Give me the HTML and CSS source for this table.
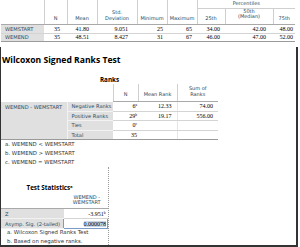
FILE: index.html
```html
<!DOCTYPE html>
<html>
<head>
<meta charset="utf-8">
<link rel="stylesheet" href="styles.css">
</head>
<body>
<div class="desc-wrap">
<table class="desc">
  <colgroup>
    <col class="w43"><col class="w23"><col class="w30"><col class="w40"><col class="w30"><col class="w30"><col class="w28"><col class="w48"><col class="w22">
  </colgroup>
  <tr class="h8">
    <th rowspan="2" class="blank"></th>
    <th rowspan="2">N</th>
    <th rowspan="2">Mean</th>
    <th rowspan="2">Std.<br>Deviation</th>
    <th rowspan="2">Minimum</th>
    <th rowspan="2">Maximum</th>
    <th colspan="3" class="pct">Percentiles</th>
  </tr>
  <tr class="h16">
    <th>25th</th>
    <th class="median">50th<br>(Median)</th>
    <th>75th</th>
  </tr>
  <tr class="row">
    <td class="lab">WEMSTART</td><td>35</td><td>41.80</td><td>9.051</td><td>25</td><td>65</td><td>34.00</td><td>42.00</td><td>48.00</td>
  </tr>
  <tr class="row last">
    <td class="lab">WEMEND</td><td>35</td><td>48.51</td><td>8.427</td><td>31</td><td>67</td><td>46.00</td><td>47.00</td><td>52.00</td>
  </tr>
</table>
</div>

<div class="frame">
  <div class="title">Wilcoxon Signed Ranks Test</div>
  <div class="ranks-block">
    <div class="subtitle">Ranks</div>
    <table class="ranks">
      <colgroup>
        <col class="w66"><col class="w46"><col class="w25"><col class="w39"><col class="w41">
      </colgroup>
      <tr class="rhead">
        <th colspan="2" class="blank"></th>
        <th>N</th>
        <th>Mean Rank</th>
        <th>Sum of<br>Ranks</th>
      </tr>
      <tr class="rrow">
        <td rowspan="4" class="lab1">WEMEND - WEMSTART</td>
        <td class="lab2">Negative Ranks</td>
        <td>6<sup>a</sup></td><td>12.33</td><td>74.00</td>
      </tr>
      <tr class="rrow">
        <td class="lab2">Positive Ranks</td>
        <td>29<sup>b</sup></td><td>19.17</td><td>556.00</td>
      </tr>
      <tr class="rrow">
        <td class="lab2">Ties</td>
        <td>0<sup>c</sup></td><td></td><td></td>
      </tr>
      <tr class="rrow last">
        <td class="lab2">Total</td>
        <td>35</td><td></td><td></td>
      </tr>
    </table>
    <div class="notes">
      <div>a. WEMEND &lt; WEMSTART</div>
      <div>b. WEMEND &gt; WEMSTART</div>
      <div>c. WEMEND = WEMSTART</div>
    </div>
  </div>

  <div class="ts-block">
    <div class="subtitle ts-title">Test Statistics<sup>a</sup></div>
    <table class="ts">
      <colgroup><col class="w63"><col class="w44"></colgroup>
      <tr class="thead">
        <th class="blank"></th>
        <th>WEMEND -<br>WEMSTART</th>
      </tr>
      <tr class="trow">
        <td class="lab">Z</td>
        <td>-3.951<sup>b</sup></td>
      </tr>
      <tr class="trow">
        <td class="lab">Asymp. Sig. (2-tailed)</td>
        <td class="sel"><span>0.000078</span></td>
      </tr>
    </table>
    <div class="notes ts-notes">
      <div>a. Wilcoxon Signed Ranks Test</div>
      <div>b. Based on negative ranks.</div>
    </div>
  </div>
  <div class="dotted"></div>
</div>
</body>
</html>
```

FILE: styles.css
```css
* { box-sizing: border-box; }
html, body { margin: 0; padding: 0; }
body {
  width: 300px;
  height: 247px;
  overflow: hidden;
  background: #fff;
  font-family: "DejaVu Sans", sans-serif;
  color: #264a60;
}
table { border-collapse: collapse; table-layout: fixed; }
th, td { padding: 0; font-weight: normal; white-space: nowrap; }
sup { font-size: 3.6px; vertical-align: 2.5px; line-height: 0; }

.w22 { width: 22px; } .w23 { width: 23px; } .w25 { width: 25px; }
.w28 { width: 28px; } .w30 { width: 30px; } .w39 { width: 39px; }
.w40 { width: 40px; } .w41 { width: 41px; } .w43 { width: 43px; }
.w44 { width: 44px; } .w46 { width: 46px; } .w48 { width: 48px; }
.w63 { width: 63px; } .w66 { width: 66px; }

/* Descriptives */
.desc-wrap { height: 47px; }
.desc { margin-left: 1px; width: 294px; }
.desc th {
  font-size: 5px;
  line-height: 5.8px;
  text-align: center;
  vertical-align: bottom;
  padding-bottom: 2.5px;
  border-left: 1px solid #cfcfcf;
  border-bottom: 1px solid #a9a9a9;
}
.desc th.blank { border-left: 0; }
.desc th.pct { vertical-align: middle; padding-bottom: 0; border-bottom: 1px solid #cfcfcf; }
.desc th.median { vertical-align: middle; padding-bottom: 4px; }
.desc .h8 { height: 8px; }
.desc .h16 { height: 16px; }
.desc .row { height: 8.5px; }
.desc td {
  font-family: "Liberation Serif", serif;
  font-size: 6px;
  line-height: 6px;
  color: #010205;
  text-align: right;
  border-bottom: 1px solid #d4d4d4;
}
.desc .last td { border-bottom: 1px solid #9a9a9a; }
.desc td.lab {
  font-family: "DejaVu Sans", sans-serif;
  font-size: 5.1px;
  color: #264a60;
  text-align: left;
  padding-left: 4px;
  background: #e0e0e0;
}
.desc td:nth-child(2) { padding-right: 7px; }
.desc td:nth-child(3) { padding-right: 8px; }
.desc td:nth-child(4) { padding-right: 9px; }
.desc td:nth-child(5) { padding-right: 4px; }
.desc td:nth-child(6) { padding-right: 5px; }
.desc td:nth-child(7) { padding-right: 5px; }
.desc td:nth-child(8) { padding-right: 7px; }
.desc td:nth-child(9) { padding-right: 2px; }

/* Frame */
.frame {
  position: relative;
  width: 298px;
  height: 200px;
  padding-top: 7.5px;
  border-left: 1px solid #333;
  border-right: 2px solid #333;
  border-bottom: 2px solid #333;
}
.title {
  font-family: "Open Sans", sans-serif;
  font-weight: bold;
  font-size: 8.6px;
  line-height: 10px;
  color: #000;
  padding-left: 1px;
}
.subtitle {
  font-family: "Open Sans", sans-serif;
  font-weight: bold;
  font-size: 6.3px;
  line-height: 8px;
  color: #000;
  text-align: center;
}
.ranks-block { width: 217px; margin-top: 11px; }
.ranks th {
  font-size: 5px;
  line-height: 5.8px;
  text-align: center;
  vertical-align: bottom;
  padding-bottom: 3px;
  border-left: 1px solid #cfcfcf;
  border-bottom: 1px solid #a9a9a9;
}
.ranks th.blank { border-left: 0; border-bottom: 0; }
.ranks .rhead { height: 18px; }
.ranks .rrow { height: 9.5px; }
.ranks td {
  font-family: "Liberation Serif", serif;
  font-size: 6px;
  line-height: 6px;
  color: #010205;
  text-align: right;
  border-bottom: 1px solid #d4d4d4;
}
.ranks .last td { border-bottom: 1px solid #9a9a9a; }
.ranks td:nth-last-child(3) { padding-right: 1px; }
.ranks td:nth-last-child(2) { padding-right: 5px; }
.ranks td:nth-last-child(1) { padding-right: 5px; border-left: 1px solid #e6e6e6; }
.ranks td.lab1, .ranks td.lab2 {
  font-family: "DejaVu Sans", sans-serif;
  font-size: 5.1px;
  color: #264a60;
  text-align: left;
  background: #e0e0e0;
  padding-right: 0;
  border-left: 0;
}
.ranks td.lab1 { vertical-align: top; padding-left: 4px; padding-top: 2.5px; border-right: 1px solid #f2f2f2; border-bottom: 1px solid #9a9a9a; }
.ranks td.lab2 { padding-left: 4px; border-bottom: 1px solid #f2f2f2; }
.ranks .last td.lab2 { border-bottom: 1px solid #9a9a9a; }

.notes {
  font-size: 5.4px;
  line-height: 9.2px;
  color: #333;
  padding-left: 4px;
}

.ts-block { width: 107px; margin-top: 15px; }
.ts-title { line-height: 9px; padding-right: 10px; }
.ts-title sup { font-size: 3.8px; }
.ts th {
  font-size: 5px;
  line-height: 5.8px;
  text-align: center;
  vertical-align: bottom;
  padding-bottom: 2px;
  padding-left: 2px;
  border-bottom: 1px solid #a9a9a9;
}
.ts .thead { height: 17px; }
.ts .trow { height: 10px; }
.ts td {
  font-family: "Liberation Serif", serif;
  font-size: 6px;
  line-height: 6px;
  color: #010205;
  text-align: right;
  padding-right: 2px;
  border-bottom: 1px solid #d4d4d4;
}
.ts td.lab {
  font-family: "DejaVu Sans", sans-serif;
  font-size: 5.1px;
  color: #264a60;
  text-align: left;
  padding-left: 4px;
  background: #e0e0e0;
  border-bottom: 1px solid #f2f2f2;
}
.ts td.sel {
  border: 1px solid #7b9bc8;
  padding-right: 1px;
}
.ts td.sel span { background: #c9d7ea; color: #000; }
.ts-notes { margin-top: -1px; padding-left: 6px; }

.dotted {
  position: absolute;
  left: 107px;
  top: 120px;
  bottom: 0;
  border-left: 1px dotted #9a9a9a;
}
```
